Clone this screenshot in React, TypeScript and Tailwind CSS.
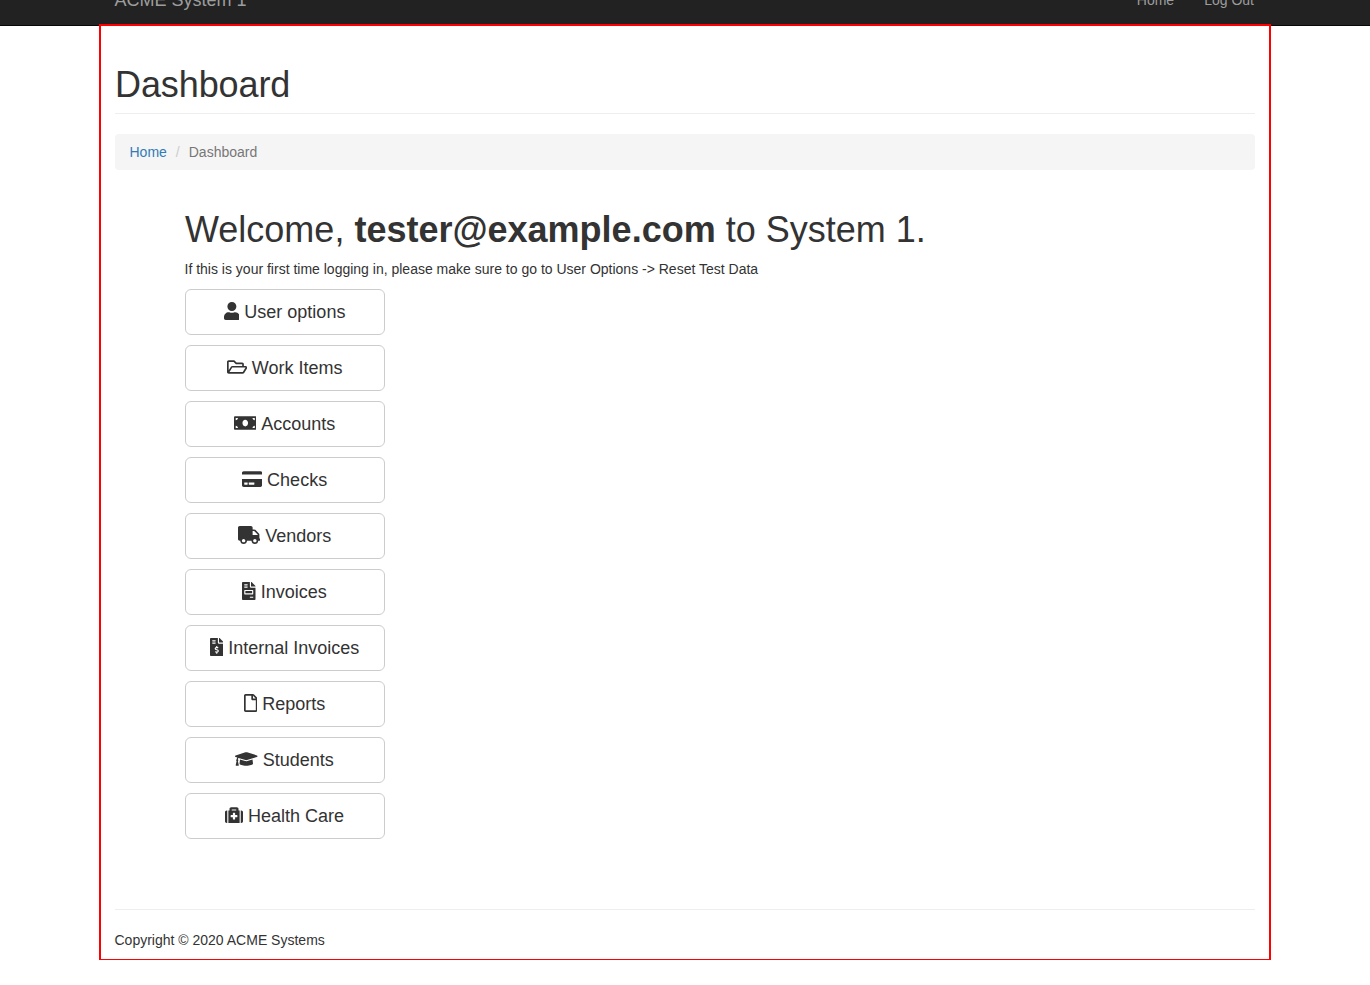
import React from "react";
import type { IconType } from "react-icons";
import {
  FaUser,
  FaRegFolderOpen,
  FaMoneyBill,
  FaCreditCard,
  FaTruck,
  FaFileInvoice,
  FaFileInvoiceDollar,
  FaRegFile,
  FaGraduationCap,
  FaMedkit,
} from "react-icons/fa";

type Action = { label: string; icon: IconType; width: string };

const actions: Action[] = [
  { label: "User options", icon: FaUser, width: "w-[15.75px]" },
  { label: "Work Items", icon: FaRegFolderOpen, width: "w-[20.25px]" },
  { label: "Accounts", icon: FaMoneyBill, width: "w-[22.5px]" },
  { label: "Checks", icon: FaCreditCard, width: "w-[20.25px]" },
  { label: "Vendors", icon: FaTruck, width: "w-[22.5px]" },
  { label: "Invoices", icon: FaFileInvoice, width: "w-[13.5px]" },
  { label: "Internal Invoices", icon: FaFileInvoiceDollar, width: "w-[13.5px]" },
  { label: "Reports", icon: FaRegFile, width: "w-[13.5px]" },
  { label: "Students", icon: FaGraduationCap, width: "w-[22.5px]" },
  { label: "Health Care", icon: FaMedkit, width: "w-[18px]" },
];

function NavBar() {
  return (
    <nav className="h-[26px] overflow-hidden border-b border-[#080808] bg-[#222222] text-[#9d9d9d]">
      <div className="mx-auto -mt-[10px] flex h-5 w-[1141px] items-center justify-between pr-[1.5px] leading-5">
        <a href="#" className="text-[18px]">ACME System 1</a>
        <div className="flex gap-[30px] text-[14px]">
          <a href="#">Home</a>
          <a href="#">Log Out</a>
        </div>
      </div>
    </nav>
  );
}

function ActionButton({ label, icon: Icon, width }: Action) {
  return (
    <button className="flex h-[46px] w-[200px] items-center justify-center gap-[5px] rounded-[6px] border border-[#cccccc] bg-white pr-[1px] text-[18px] leading-6">
      <Icon className={`mb-[2px] h-[18px] shrink-0 ${width}`} />
      <span className="whitespace-nowrap">{label}</span>
    </button>
  );
}

export default function App() {
  return (
    <div className="min-h-[985px] bg-white font-['Liberation_Sans',Arial,sans-serif] text-[14px] leading-5 text-[#333333]">
      <NavBar />
      <main className="relative mx-auto -mt-[2px] h-[936px] w-[1172px] border-2 border-b border-[#ff0000] px-[14px] pt-[39px]">
        <h1 className="h-[49px] border-b border-[#eeeeee] text-[36px] leading-[40px]">
          <span className="tracking-[-0.1px]">Dashboard</span>
        </h1>
        <ol className="mt-5 flex h-9 items-center rounded bg-[#f5f5f5] px-[14.5px]">
          <li><a href="#" className="text-[#337ab7]">Home</a></li>
          <li className="px-[9px] text-[#cccccc]">/</li>
          <li className="text-[#777777]">Dashboard</li>
        </ol>
        <section className="px-[70px] pt-10">
          <h2 className="text-[36px] leading-[40px]">
            Welcome, <strong>tester@example.com</strong> to System 1.
          </h2>
          <p className="-ml-[0.5px] mt-[9px]">
            If this is your first time logging in, please make sure to go to User Options -&gt; Reset Test Data
          </p>
          <div className="mt-[10px] flex flex-col gap-[10px]">
            {actions.map((a) => (
              <ActionButton key={a.label} {...a} />
            ))}
          </div>
        </section>
        <hr className="mt-[70px] border-[#eeeeee]" />
        <footer className="-ml-[0.5px] pt-5">Copyright © 2020 ACME Systems</footer>
      </main>
    </div>
  );
}
